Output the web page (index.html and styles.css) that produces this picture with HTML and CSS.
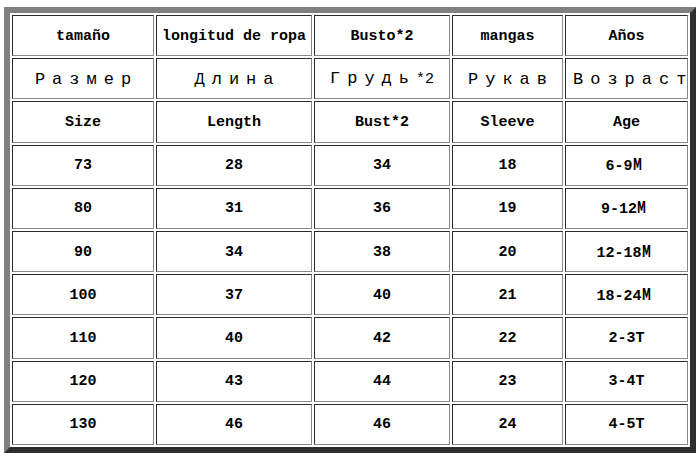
FILE: index.html
```html
<!DOCTYPE html>
<html>
<head>
<meta charset="utf-8">
<link rel="stylesheet" href="styles.css">
</head>
<body>
<div class="wrap">
<table class="size">
<colgroup>
<col class="c1"><col class="c2"><col class="c3"><col class="c4"><col class="c5">
</colgroup>
<tr><td>tamaño</td><td>longitud de ropa</td><td>Busto*2</td><td>mangas</td><td>Años</td></tr>
<tr class="ru-row"><td><span class="ru">Размер</span></td><td><span class="ru">Длина</span></td><td><span class="ru ru-mix">Грудь</span><span class="ast">*2</span></td><td><span class="ru">Рукав</span></td><td><span class="ru">Возраст</span></td></tr>
<tr><td>Size</td><td>Length</td><td>Bust*2</td><td>Sleeve</td><td>Age</td></tr>
<tr><td>73</td><td>28</td><td>34</td><td>18</td><td>6-9<span class="m">M</span></td></tr>
<tr><td>80</td><td>31</td><td>36</td><td>19</td><td>9-12<span class="m">M</span></td></tr>
<tr><td>90</td><td>34</td><td>38</td><td>20</td><td>12-18<span class="m">M</span></td></tr>
<tr><td>100</td><td>37</td><td>40</td><td>21</td><td>18-24<span class="m">M</span></td></tr>
<tr><td>110</td><td>40</td><td>42</td><td>22</td><td>2-3T</td></tr>
<tr><td>120</td><td>43</td><td>44</td><td>23</td><td>3-4T</td></tr>
<tr><td>130</td><td>46</td><td>46</td><td>24</td><td>4-5T</td></tr>
</table>
</div>
</body>
</html>
```
FILE: styles.css
```css
html, body {
  margin: 0;
  padding: 0;
  background: #ffffff;
}
.wrap {
  padding: 7px 4px 0 4px;
}
.size {
  border-collapse: separate;
  border-spacing: 2px;
  border: 6px solid;
  border-color: #808080 #2e2e2e #2e2e2e #808080;
  width: 692px;
  height: 446px;
  table-layout: fixed;
  box-sizing: border-box;
}
.size tr {
  height: 41px;
}
.c1 { width: 142px; }
.c2 { width: 156px; }
.c3 { width: 136px; }
.c4 { width: 111px; }
.c5 { width: 123px; }
.size td {
  border: 1px solid;
  border-color: #2a2a2a #8a8a8a #8a8a8a #2a2a2a;
  padding: 2px 0 0 0;
  text-align: center;
  vertical-align: middle;
  font-family: "Liberation Mono", "Courier New", monospace;
  font-weight: bold;
  font-size: 15px;
  line-height: 18px;
  color: #000;
  white-space: nowrap;
}
.ru-row td {
  font-weight: normal;
  font-size: 17px;
}
.ru {
  letter-spacing: 7px;
  padding-left: 7px;
}
.ru-mix {
  padding-left: 0;
}
.ast {
  font-size: 15px;
}
.m {
  display: inline-block;
  font-family: "DejaVu Sans", sans-serif;
  font-weight: bold;
  transform: scaleX(0.6);
  transform-origin: left center;
}
```
